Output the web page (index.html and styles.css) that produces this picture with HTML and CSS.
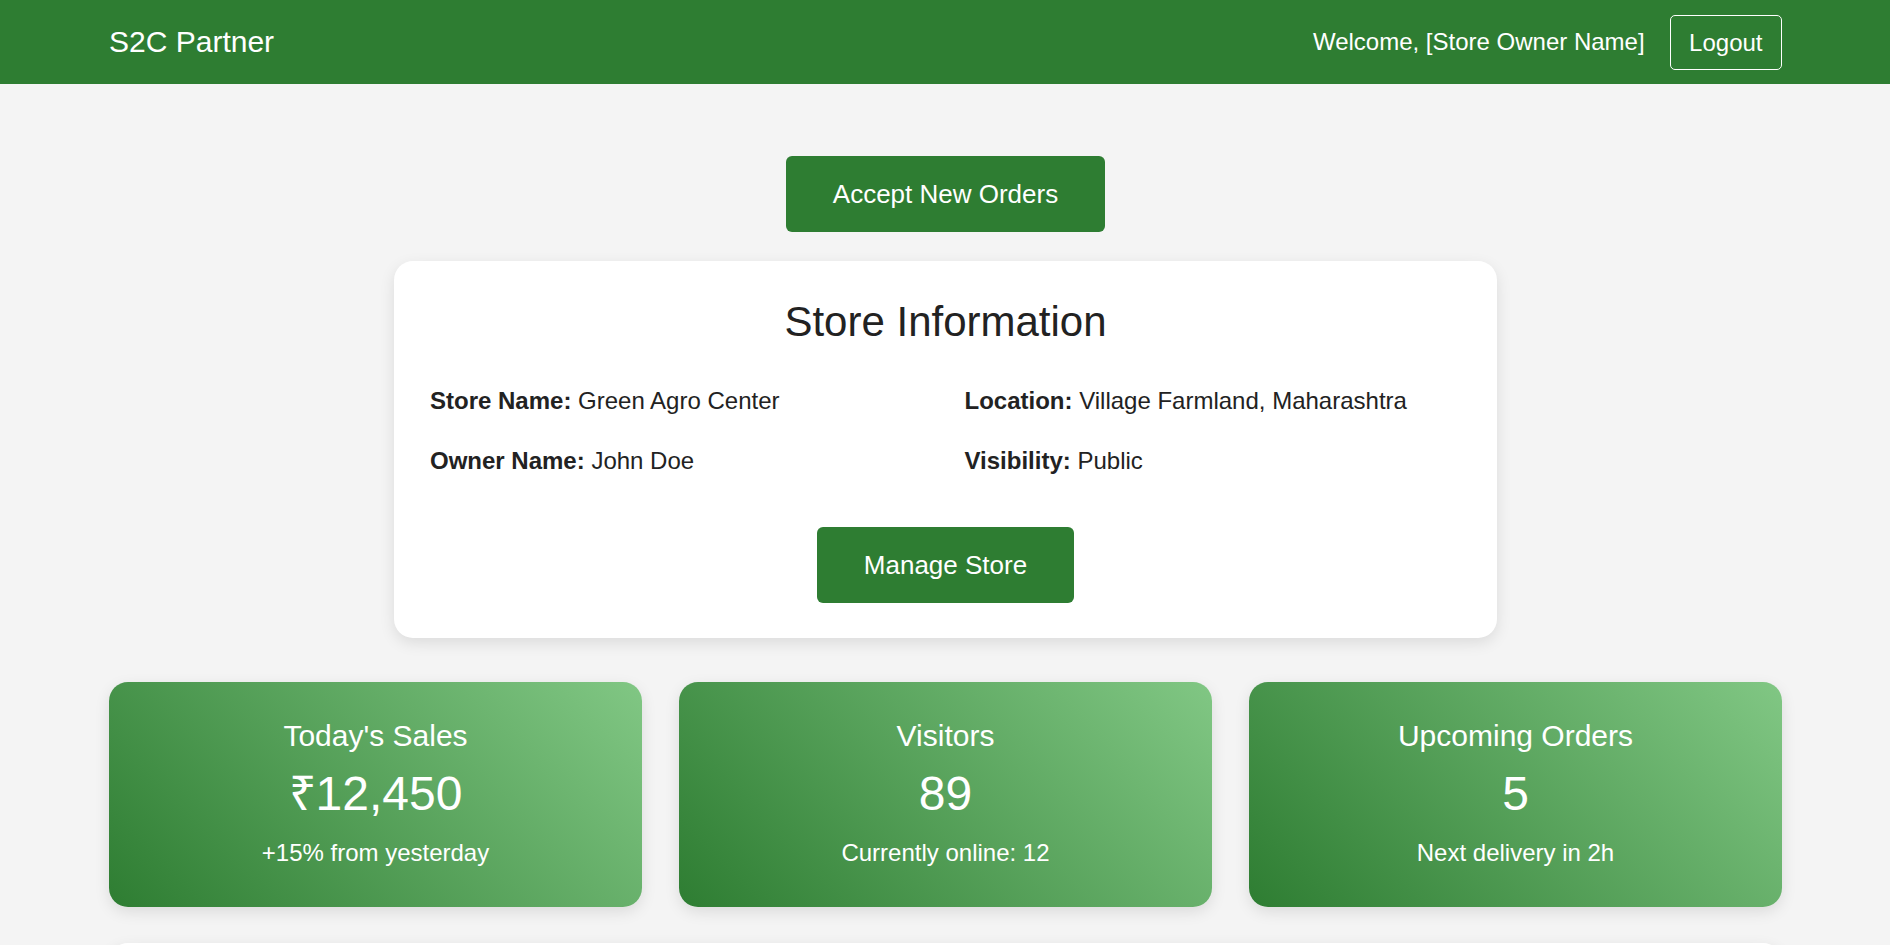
FILE: index.html
```html
<!DOCTYPE html>
<html lang="en">
<head>
<meta charset="utf-8">
<title>S2C Partner</title>
<link rel="stylesheet" href="styles.css">
</head>
<body>
<header class="topbar">
  <div class="logo">S2C Partner</div>
  <div class="user">
    <span class="welcome">Welcome, [Store Owner Name]</span>
    <button class="logout">Logout</button>
  </div>
</header>
<main class="main">
  <div class="center">
    <button class="btn">Accept New Orders</button>
  </div>
  <section class="store-card">
    <h2 class="store-title">Store Information</h2>
    <div class="info-grid">
      <p class="info"><strong>Store Name:</strong> Green Agro Center</p>
      <p class="info"><strong>Location:</strong> Village Farmland, Maharashtra</p>
      <p class="info"><strong>Owner Name:</strong> John Doe</p>
      <p class="info"><strong>Visibility:</strong> Public</p>
    </div>
    <div class="center manage-wrap">
      <button class="btn">Manage Store</button>
    </div>
  </section>
  <section class="stats">
    <div class="stat">
      <h3 class="stat-title">Today's Sales</h3>
      <div class="stat-value">₹12,450</div>
      <div class="stat-sub">+15% from yesterday</div>
    </div>
    <div class="stat">
      <h3 class="stat-title">Visitors</h3>
      <div class="stat-value">89</div>
      <div class="stat-sub">Currently online: 12</div>
    </div>
    <div class="stat">
      <h3 class="stat-title">Upcoming Orders</h3>
      <div class="stat-value">5</div>
      <div class="stat-sub">Next delivery in 2h</div>
    </div>
  </section>
  <section class="panel"></section>
</main>
</body>
</html>
```

FILE: styles.css
```css
* { box-sizing: border-box; }
body {
  margin: 0;
  background: #f4f4f4;
  font-family: "Liberation Sans", Arial, sans-serif;
  color: #222;
}
.topbar {
  display: flex;
  justify-content: space-between;
  align-items: center;
  height: 84px;
  padding: 0 108px 0 109px;
  background: #2e7d32;
  color: #fff;
}
.logo { font-size: 30px; }
.user { display: flex; align-items: center; gap: 25px; }
.welcome { font-size: 24px; }
.logout {
  font-family: inherit;
  font-size: 24px;
  color: #fff;
  background: transparent;
  border: 1px solid #fff;
  border-radius: 5px;
  padding: 13px 18.5px 12px;
  line-height: normal;
}
.main { padding: 0 108px 0 109px; }
.center { display: flex; justify-content: center; }
.main > .center:first-child { padding-top: 72px; }
.btn {
  font-family: inherit;
  font-size: 26px;
  color: #fff;
  background: #2e7d32;
  border: none;
  border-radius: 6px;
  padding: 23px 46.5px;
  line-height: 30px;
}
.store-card {
  width: 1103px;
  margin: 29px auto 0;
  background: #fff;
  border-radius: 19px;
  padding: 37px 36px 35px;
  box-shadow: 0 5px 15px rgba(0,0,0,0.1);
}
.store-title {
  margin: 0;
  text-align: center;
  font-size: 42px;
  font-weight: normal;
  line-height: 48px;
}
.info-grid {
  display: grid;
  grid-template-columns: 1fr 1fr;
  column-gap: 38px;
  row-gap: 32px;
  margin-top: 41px;
}
.info { margin: 0; font-size: 24px; line-height: 28px; }
.manage-wrap { margin-top: 52px; }
.stats {
  display: grid;
  grid-template-columns: repeat(3, 1fr);
  gap: 37px;
  margin-top: 44px;
}
.stat {
  height: 225px;
  border-radius: 19px;
  padding: 36.5px 20px 0;
  text-align: center;
  color: #fff;
  background: linear-gradient(45deg, #2e7d32, #81c784);
  box-shadow: 0 5px 15px rgba(0,0,0,0.1);
}
.stat-title {
  margin: 0;
  font-size: 30px;
  font-weight: normal;
  line-height: 34px;
}
.stat-value {
  margin-top: 13px;
  font-size: 48px;
  line-height: 55px;
}
.stat-sub {
  margin-top: 18px;
  font-size: 24px;
  line-height: 28px;
}
.panel {
  margin-top: 36px;
  height: 200px;
  background: #fff;
  border-radius: 19px;
  box-shadow: 0 5px 15px rgba(0,0,0,0.1);
}
```
